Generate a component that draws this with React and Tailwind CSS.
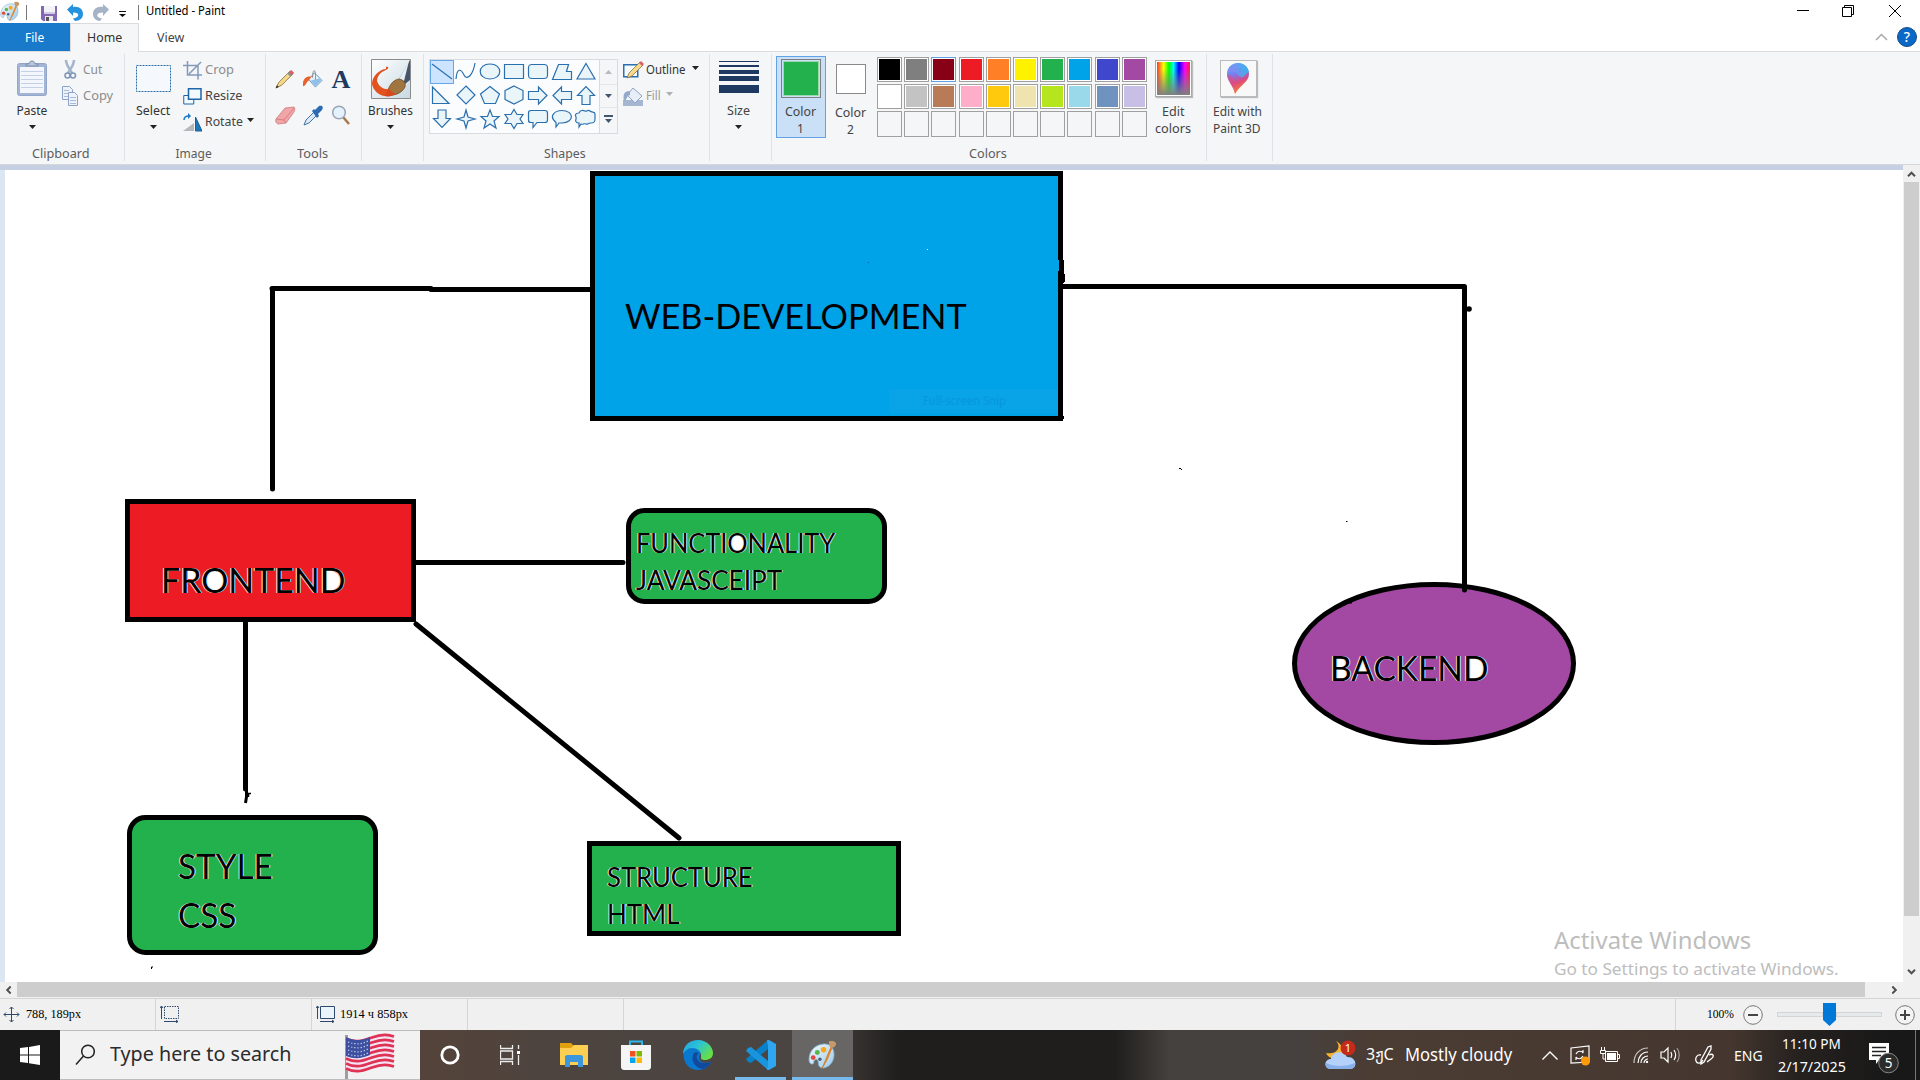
import React, { useLayoutEffect, useRef, useState } from "react";

/* Single line of text condensed or widened to a fixed width. */
function Fit({ w, className = "", children }) {
  const ref = useRef(null);
  const [scale, setScale] = useState(1);
  useLayoutEffect(() => {
    if (ref.current && ref.current.offsetWidth) setScale(w / ref.current.offsetWidth);
  }, [w, children]);
  return (
    <span className={"block shrink-0 whitespace-nowrap " + className} style={{ width: w }}>
      <span ref={ref} className="inline-block origin-left" style={{ transform: `scaleX(${scale})` }}>
        {children}
      </span>
    </span>
  );
}

function Caret({ className = "text-[#222]" }) {
  return (
    <svg className={"block shrink-0 " + className} width="7" height="4" viewBox="0 0 7 4">
      <path d="M0 0h7L3.5 4z" fill="currentColor" />
    </svg>
  );
}

function PaletteIcon({ className }) {
  return (
    <svg className={className} viewBox="0 0 28 28">
      <defs>
        <linearGradient id="pal" x1="0" y1="0" x2="1" y2="1">
          <stop offset="0" stopColor="#f2fafe" />
          <stop offset="1" stopColor="#9ccbe8" />
        </linearGradient>
      </defs>
      <path d="M14 4C6 5 1 11 1 19c0 3 2 5 4 4 1-1 0-3 2-4s3 1 3 3c0 3 1 5 5 5 7-1 11-8 10-15C24 6 20 3 14 4z" fill="url(#pal)" stroke="#7fb0d0" strokeWidth=".8" />
      <circle cx="5" cy="17" r="2.3" fill="#e0483c" />
      <circle cx="9" cy="12" r="2.4" fill="#5bb548" />
      <circle cx="15" cy="9.5" r="2.7" fill="#fba81c" />
      <circle cx="11.500" cy="18.500" r="1.700" fill="#4a6378" />
      <path d="M22 7 13.500 27.500 18.500 19 23.500 7z" fill="#f38b21" stroke="#d36c12" strokeWidth=".6" />
      <path d="M20 1c1 1 4-1 6 1 2 1 1 4-1 5l-3 1c-1-2-2-4-2-7z" fill="#c69a6b" />
    </svg>
  );
}

function TitleBar() {
  return (
    <div className="flex h-[23px] items-start bg-white">
      <PaletteIcon className="mt-[1px] h-[20px] w-[20px]" />
      <div className="ml-[6px] mt-[5px] h-[15px] w-px bg-[#777]" />
      <svg className="ml-[14px] mt-[6px]" width="16" height="15" viewBox="0 0 16 15">
        <path d="M0 0h16v15H2l-2-2z" fill="#8468b4" />
        <path d="M3 0h11v8H3z" fill="#f1f3f6" />
        <path d="M3 6h11v2H3z" fill="#d3cbe3" />
        <path d="M4 10h8v5H4z" fill="#e8e8ef" />
        <path d="M5 11h3v4H5z" fill="#555" />
      </svg>
      <svg className="ml-[10px] mt-[3px]" width="16" height="19" viewBox="0 0 16 19">
        <path d="M0 6.500 6 1v3c6-1 10 2 10 7 0 4-3 7-8 7l-2-2.500c6-.5 8-6 0-6v3.500z" fill="#2492dc" />
      </svg>
      <svg className="ml-[10px] mt-[3px]" width="16" height="19" viewBox="0 0 16 19">
        <path d="M16 6.500 10 1v3C4 3 0 6 0 11c0 4 3 7 7 7l2-2.500c-6-.5-7-6 1-6v3.500z" fill="#a5b3c7" />
      </svg>
      <svg className="ml-[10px] mt-[11px]" width="7" height="6" viewBox="0 0 7 6">
        <path d="M0 0h7v1H0zM0 3h7L3.500 6z" fill="#111" />
      </svg>
      <div className="ml-[12px] mt-[5px] h-[15px] w-px bg-[#777]" />
      <Fit w={79} className="ml-[7px] mt-[3px] text-[12px] leading-[16px] text-black">Untitled - Paint</Fit>
      <svg className="ml-auto mr-[18px] mt-[5px]" width="105" height="13" viewBox="0 0 105 13" fill="none" stroke="#000">
        <path d="M0 5.500h12" />
        <path d="M45.500 2.500h9v9h-9zM47.500 2.500v-2h9v9h-2" />
        <path d="M92 0l12 12M104 0 92 12" />
      </svg>
    </div>
  );
}

function Tabs() {
  return (
    <div className="flex h-[29px] border-b border-[#dadbdc] bg-white text-[12px] leading-[16px]">
      <div className="flex h-[28px] w-[70px] items-center justify-center bg-[#1979ca] pr-px pt-px text-white">
        <Fit w={19}>File</Fit>
      </div>
      <div className="flex h-[29px] w-[69px] items-center justify-center border-x border-t border-[#dadbdc] bg-[#f5f6f7] text-[#333]">
        <Fit w={35}>Home</Fit>
      </div>
      <Fit w={27} className="ml-[18px] mt-[7px] text-[#444]">View</Fit>
      <div className="ml-auto mr-[3px] flex items-center">
        <svg width="13" height="8" viewBox="0 0 13 8" fill="none" stroke="#aaa" strokeWidth="1.500">
          <path d="M1 7l5.500-5.500L12 7" />
        </svg>
        <div className="ml-[9px] flex h-[20px] w-[20px] items-center justify-center rounded-full border border-[#174a80] bg-[#0a68c8] text-[14px] font-medium text-white">?</div>
      </div>
    </div>
  );
}

function Group({ className, label, labelW, children }) {
  return (
    <div className={"flex h-[112px] shrink-0 flex-col " + className}>
      <div className="flex min-h-0 flex-1">
        <div className="flex min-w-0 flex-1 flex-col">
          <div className="flex h-[92px] items-start">{children}</div>
          {label && (
            <div className="flex justify-center pr-[3px] pt-[2px] text-[12px] leading-[16px] text-[#5c5c5c]">
              <Fit w={labelW}>{label}</Fit>
            </div>
          )}
        </div>
        <div className="mt-[2px] h-[107px] w-px bg-[#dfe1e4]" />
      </div>
    </div>
  );
}

function ClipboardGroup() {
  return (
    <Group className="w-[125px]" label={"Clipboard"} labelW={58}>
      <div className="ml-[16px] flex w-[32px] flex-col items-center pt-[8px]">
        <svg width="32" height="37" viewBox="0 0 32 37">
          <rect x="1.500" y="3.500" width="29" height="32" rx="2" fill="#a3b5d6" stroke="#93a6c8" />
          <path d="M4 7h24v26H4z" fill="#f3f7fd" />
          <path d="M5 11.500h22M5 15.500h22M5 19.500h22M5 23.500h22M5 27.500h22" stroke="#c3d0e5" />
          <path d="M10 6V4h3c0-4 6-4 6 0h3v2z" fill="#b9c6dc" stroke="#7f91b0" />
        </svg>
        <Fit w={31} className="mt-[6px] text-[12px] leading-[16px] text-[#333]">Paste</Fit>
        <Caret className="mt-[6px] text-[#222]" />
      </div>
      <div className="ml-[14px] flex flex-col pt-[8px] text-[12px] leading-[16px] text-[#8d8d8d]">
        <div className="flex h-[20px] items-center">
          <svg width="17" height="20" viewBox="0 0 17 20" fill="none">
            <path d="M4 0c0 5 3 8 6 13M12 0c0 5-3 8-6 13" stroke="#a3b4cd" strokeWidth="2.500" />
            <circle cx="5.500" cy="15.500" r="2.500" stroke="#7e95b8" strokeWidth="1.500" />
            <circle cx="11" cy="15.500" r="2.500" stroke="#7e95b8" strokeWidth="1.500" />
          </svg>
          <Fit w={19} className="ml-[4px]">Cut</Fit>
        </div>
        <div className="mt-[6px] flex h-[20px] items-center">
          <svg width="17" height="20" viewBox="0 0 17 20" fill="#eef3fb" stroke="#8ca2c6">
            <path d="M.5.5h7l3 3v10H.5z" />
            <path d="M6.500 6.500h6l3 3v10h-9z" />
            <path d="M2 4.500h5M2 7.500h4M2 10.500h4M8 11.500h6M8 14.500h6M8 17.500h6" stroke="#a9bad6" />
          </svg>
          <Fit w={30} className="ml-[4px]">Copy</Fit>
        </div>
      </div>
    </Group>
  );
}

function ImageGroup() {
  return (
    <Group className="w-[141px]" label="Image" labelW={36}>
      <div className="ml-[11px] flex w-[35px] flex-col items-center pt-[13px]">
        <svg width="35" height="27" viewBox="0 0 35 27">
          <rect x=".5" y=".5" width="34" height="26" fill="#f5f9fe" stroke="#2a6cab" strokeDasharray="2 1" />
        </svg>
        <Fit w={34} className="-ml-px mt-[11px] text-[12px] leading-[16px] text-[#333]">Select</Fit>
        <Caret className="-ml-px mt-[6px] text-[#222]" />
      </div>
      <div className="ml-[12px] flex flex-col pt-[8px] text-[12px] leading-[16px] text-[#444]">
        <div className="flex h-[20px] items-center text-[#8d8d8d]">
          <svg width="19" height="19" viewBox="0 0 19 19" fill="none" stroke="#8299bb" strokeWidth="1.500">
            <path d="M0 4.500h15v14M4.500 0v14H19M6 13 18 1" />
          </svg>
          <Fit w={29} className="ml-[3px]">Crop</Fit>
        </div>
        <div className="mt-[6px] flex h-[20px] items-center">
          <svg width="19" height="17" viewBox="0 0 19 17" fill="#f4f9fe" stroke="#1d66a8">
            <path d="M.75 7.500h10v8.500h-10z" />
            <path d="M5.500.75h12.500v10.500H5.500z" strokeWidth="1.500" />
          </svg>
          <Fit w={37} className="ml-[3px]">Resize</Fit>
        </div>
        <div className="mt-[6px] flex h-[20px] items-center">
          <svg width="19" height="19" viewBox="0 0 19 19">
            <path d="M0 18 11 10v8z" fill="#b5b8bc" />
            <path d="M12.500 4v14H19z" fill="#2177b8" stroke="#1b5f97" />
            <path d="M1 7c0-3 2-4 5-4" fill="none" stroke="#1d78c8" strokeWidth="1.500" />
            <path d="M5 0l3 3-3 3z" fill="#1d78c8" />
          </svg>
          <Fit w={38} className="ml-[3px]">Rotate</Fit>
          <Caret className="-mt-[5px] ml-[4px] text-[#222]" />
        </div>
      </div>
    </Group>
  );
}

function ToolsGroup() {
  return (
    <Group className="w-[96px]" label="Tools" labelW={31}>
      <div className="ml-[9px] grid grid-cols-[20px_20px_20px] gap-x-[8px] gap-y-[15px] pt-[17px]">
        <svg width="20" height="20" viewBox="0 0 21 21">
          <path d="M1 20l3-6L16 2l3 3L7 17z" fill="#f7d98e" stroke="#816128" strokeWidth=".8" />
          <path d="M14 4l3-3 3 3-3 3z" fill="#d8606c" />
          <path d="M13 5l1.500-1.500 3 3L16 8z" fill="#7f9a8c" />
          <path d="M1 20l1-3 2 2z" fill="#222" />
        </svg>
        <svg width="20" height="20" viewBox="0 0 21 21">
          <path d="M12 4l8 8-7 7-7-8z" fill="#e4f0fa" stroke="#6b93b8" />
          <path d="M8 12l9-2 2 2-6 6z" fill="#8fc1e8" />
          <path d="M10 9c0-10 4-10 3 2" fill="none" stroke="#888" />
          <path d="M9 8c-5-1-10 2-9 10 3 0 3-4 6-6z" fill="#e9622d" />
        </svg>
        <div className="flex h-[21px] items-center justify-center font-['Liberation_Serif'] text-[26px] font-bold leading-[20px] text-[#1f3a60]">A</div>
        <svg width="21" height="21" viewBox="0 0 21 21">
          <path d="M1 14 10 3l9-1c1 1 1 3 0 5l-8 11-8 1c-2-1-3-3-2-5z" fill="#f2a5a7" stroke="#cc7a7d" strokeWidth=".8" />
          <path d="M1 14l8 1L19 3M9 15l2 3" fill="none" stroke="#d98084" />
        </svg>
        <svg width="21" height="21" viewBox="0 0 21 21">
          <path d="M1 20l2-5 8-8 3 3-8 8z" fill="#d8eaf8" stroke="#48749f" />
          <path d="M9 6l2-2 1 1 4-4c3-1 5 1 3 4l-4 4 1 2-2 2z" fill="#2b6bb3" />
        </svg>
        <svg width="21" height="21" viewBox="0 0 21 21">
          <path d="M12 12l6 7" stroke="#a9784c" strokeWidth="2.500" />
          <circle cx="8" cy="7.500" r="6.300" fill="#e5f2fd" stroke="#99a5b3" strokeWidth="1.500" />
        </svg>
      </div>
    </Group>
  );
}

function BrushesGroup() {
  return (
    <Group className="w-[62px]">
      <div className="ml-[6px] flex w-[45px] flex-col items-center pt-[7px]">
        <svg width="40" height="40" viewBox="0 0 40 40">
          <defs>
            <linearGradient id="bb" x1="0" y1="0" x2="1" y2="1">
              <stop offset="0" stopColor="#fff" />
              <stop offset="1" stopColor="#c7d9e2" />
            </linearGradient>
          </defs>
          <path d="M.5.5h39v39H.5z" fill="url(#bb)" stroke="#8b8b8b" />
          <path d="M15 8c3-1 3 2 0 3C9 13 6 18 6 22c2 6 7 9 13 8l0 7C10 39 2 32 1 25 1 17 9 10 15 10z" fill="#e2521f" />
          <path d="M28 20 39 1v20l-5 4z" fill="#46546a" />
          <path d="M28 20 38 2l-5 20z" fill="#e8edf3" />
          <path d="M16 36c1-8 5-15 12-16 5 1 7 4 6 8-3 6-10 9-18 8z" fill="#a0753f" stroke="#6f4b24" strokeWidth=".8" />
          <path d="M14 37c1-3 2-6 4-8 1 3 4 5 7 6-4 2-7 3-11 2z" fill="#d9481c" />
        </svg>
        <Fit w={45} className="mt-[4px] text-[12px] leading-[16px] text-[#333]">Brushes</Fit>
        <Caret className="mt-[6px] text-[#222]" />
      </div>
    </Group>
  );
}

const SHAPES = [
  "M2 4l20 15",
  "M2 19c1-12 5-10 8-4s9 0 11-12",
  "M12 4c13 0 13 15 0 15S-1 4 12 4z",
  "M2.500 4.500h19v14h-19z",
  "M6 4.500h12c3 0 3.500 1 3.500 3.500v7c0 2.500-.5 3.500-3.500 3.500H6c-3 0-3.500-1-3.500-3.500V8c0-2.500.5-3.500 3.500-3.500z",
  "M8.500 4.500h10l-2 7h5v8h-19z",
  "M12 3.500l9 15.500H3z",
  "M2.500 3v16.500H19z",
  "M12 2l9 9-9 9-9-9z",
  "M12 2.500l9.500 7.500-4 9.500h-11L2.500 10z",
  "M12 2l9 4.500v9L12 20l-9-4.500v-9z",
  "M2.500 7.500h10V3L21 11.500 12.500 20v-4.500h-10z",
  "M21.500 7.500h-10V3L3 11.500l8.500 8.500v-4.500h10z",
  "M8 20.500V11.500H3.500L12 2.500l8.500 9H16v9z",
  "M8 2v8.500H3.500l8.500 9 8.500-9H16V2z",
  "M12 2l2 7 7 2-7 2-2 7-2-7-7-2 7-2z",
  "M12 2l2.500 6.500h6.500l-5 4.500 2 7-6-4-6 4 2-7-5-4.500h6.500z",
  "M12 1.500l3 5h6l-3 4.500 3 4.500h-6l-3 5-3-5H3L6 11 3 6.500h6z",
  "M5 2.500h14c2 0 2.500 1 2.500 2.500v7c0 2-.5 2.500-2.500 2.500h-8l-4 5v-5H5c-2 0-2.500-.5-2.500-2.500V5c0-1.500.5-2.500 2.500-2.500z",
  "M6 14.500C-2 8 5 2.500 12 2.500c12 0 13 12 0 12.500H9l-3 4z",
  "M5 5c1-3 4-3 6-2s3-2 5 0 5 0 5 3 0 3 0 5 0 4-4 4-3 2-5 1-3 1-5 0l-2 3v-4c-3 0-4-2-3-4s-2-4 0-5 0-1 3-1z",
];

function ShapesGroup() {
  return (
    <Group className="w-[286px]" label="Shapes" labelW={42}>
      <div className="ml-[5px] mt-[7px] flex h-[75px] border border-[#d8dbdf] bg-[#fbfcfd]">
        <div className="grid h-[73px] w-[169px] grid-cols-[repeat(7,24px)] grid-rows-[24px_24px_24px]">
          {SHAPES.map((d, i) => (
            <div key={i} className={i === 0 ? "h-[24px] w-[24px] bg-[#cce4ff] outline outline-1 -outline-offset-1 outline-[#66a7e8]" : "h-[24px] w-[24px]"}>
              <svg width="24" height="24" viewBox="0 0 24 24" fill={i < 2 ? "none" : "#eaf5fa"} stroke="#2a6fae" strokeWidth="1.200">
                <path d={d} />
              </svg>
            </div>
          ))}
        </div>
        <div className="flex w-[18px] flex-col border-l border-[#d8dbdf] bg-[#f5f6f7]">
          <div className="flex h-[24px] items-center justify-center">
            <Caret className="rotate-180 text-[#b4b8c2]" />
          </div>
          <div className="flex h-[24px] items-center justify-center border-y border-[#e3e5e8]">
            <Caret className="text-[#44546a]" />
          </div>
          <div className="flex flex-1 items-center justify-center pb-[3px]">
            <svg width="9" height="8" viewBox="0 0 9 8" fill="#44546a">
              <path d="M0 0h9v2H0zM1 4h7L4.500 8z" />
            </svg>
          </div>
        </div>
      </div>
      <div className="ml-[5px] flex flex-col pt-[8px] text-[12px] leading-[16px]">
        <div className="flex h-[20px] items-center text-[#333]">
          <svg width="21" height="18" viewBox="0 0 21 18">
            <path d="M.75 3.750h14v12h-14z" fill="#f8fbfe" stroke="#2a6fae" strokeWidth="1.500" />
            <path d="M4 17l2-5L17 1l3 3L9 15z" fill="#f7d98e" stroke="#816128" strokeWidth=".7" />
            <path d="M16 2l2-2 3 3-2 2z" fill="#d8606c" />
          </svg>
          <Fit w={40} className="ml-[2px]">Outline</Fit>
          <Caret className="-mt-[4px] ml-[6px] text-[#222]" />
        </div>
        <div className="mt-[6px] flex h-[20px] items-center text-[#9a9a9a]">
          <svg width="21" height="20" viewBox="0 0 21 20">
            <path d="M0 14h20v6H0z" fill="#a6b6d0" />
            <path d="M10 2l9 8-7 7-8-8z" fill="#e8eef8" stroke="#8ea2c3" />
            <path d="M7 5C0 5 0 10 1 15c3 0 2-5 6-6z" fill="#95a9ca" />
          </svg>
          <Fit w={15} className="ml-[2px]">Fill</Fit>
          <Caret className="-mt-[4px] ml-[5px] text-[#b0b0b0]" />
        </div>
      </div>
    </Group>
  );
}

function SizeGroup() {
  return (
    <Group className="w-[62px]">
      <div className="ml-[9px] flex w-[40px] flex-col items-center pt-[9px]">
        <div className="h-px w-full bg-[#1e3a63]" />
        <div className="mt-[3px] h-[2px] w-full bg-[#1e3a63]" />
        <div className="mt-[3px] h-[4px] w-full bg-[#1e3a63]" />
        <div className="mt-[2px] h-[5px] w-full bg-[#1e3a63]" />
        <div className="mt-[4px] h-[8px] w-full bg-[#1e3a63]" />
        <Fit w={23} className="-ml-[2px] mt-[10px] text-[12px] leading-[16px] text-[#444]">Size</Fit>
        <Caret className="-ml-[2px] mt-[6px] text-[#222]" />
      </div>
    </Group>
  );
}

const COLORS = [
  "bg-[#000000]", "bg-[#7f7f7f]", "bg-[#880015]", "bg-[#ed1c24]", "bg-[#ff7f27]", "bg-[#fff200]", "bg-[#22b14c]", "bg-[#00a2e8]", "bg-[#3f48cc]", "bg-[#a349a4]",
  "bg-[#ffffff]", "bg-[#c3c3c3]", "bg-[#b97a57]", "bg-[#ffaec9]", "bg-[#ffc90e]", "bg-[#efe4b0]", "bg-[#b5e61d]", "bg-[#99d9ea]", "bg-[#7092be]", "bg-[#c8bfe7]",
];

function ColorsGroup() {
  return (
    <Group className="w-[435px]" label="Colors" labelW={38}>
      <div className="ml-[4px] mt-[4px] flex h-[82px] w-[50px] flex-col items-center border border-[#62a2e4] bg-[#c9e0f7] pt-[2px] text-[12px] text-[#444]">
        <div className="h-[40px] w-[40px] border border-[#7f7f7f] bg-[#c9e0f7] p-[1px]">
          <div className="h-full w-full border border-[#9bd8b0] bg-[#22b14c]" />
        </div>
        <Fit w={31} className="-ml-px mt-[5px] leading-[17px]">Color</Fit>
        <span className="-ml-px leading-[17px]">1</span>
      </div>
      <div className="ml-[9px] flex w-[31px] flex-col items-center pt-[12px] text-[12px] text-[#444]">
        <div className="h-[30px] w-[30px] border border-[#8a8a8a] bg-white" />
        <Fit w={31} className="mt-[10px] leading-[17px]">Color</Fit>
        <span className="leading-[17px]">2</span>
      </div>
      <div className="ml-[11px] mt-[5px] grid grid-cols-[repeat(10,25px)] gap-x-[2.200px] gap-y-[2px]">
        {COLORS.map((c, i) => (
          <div key={i} className={i === 2 ? "h-[25px] border border-[#62a2e4] bg-white p-px" : "h-[25px] border border-[#a0a0a0] bg-white p-px"}>
            <div className={"h-full w-full " + c} />
          </div>
        ))}
        {Array.from({ length: 10 }, (_, i) => (
          <div key={i} className="h-[26px] border border-[#a0a0a0] bg-[#f5f6f7]" />
        ))}
      </div>
      <div className="ml-[8px] flex w-[37px] flex-col items-center pt-[8px] text-[12px] text-[#444]">
        <div className="h-[37px] w-[37px] border border-[#aaa] bg-white p-[1px] shadow-[1px_1px_1px_#bbb]">
          <div className="h-full w-full bg-[linear-gradient(90deg,#f33,#ff0_20%,#0f0_36%,#0ff_50%,#00f_66%,#f0f_84%,#f22)]">
            <div className="h-full w-full bg-[linear-gradient(180deg,transparent_20%,#808080)]" />
          </div>
        </div>
        <Fit w={22} className="mt-[6px] leading-[17px]">Edit</Fit>
        <Fit w={36} className="leading-[17px]">colors</Fit>
      </div>
    </Group>
  );
}

function Paint3DGroup() {
  return (
    <Group className="w-[66px]">
      <div className="ml-[6px] flex w-[50px] flex-col items-center pt-[8px] text-[12px] text-[#444]">
        <div className="flex h-[37px] w-[37px] items-center justify-center border border-[#bbb] bg-[#f8f8f8] shadow-[1px_1px_1px_#bbb]">
          <svg width="22" height="31" viewBox="0 0 22 31">
            <defs>
              <linearGradient id="p3" x1=".2" y1="0" x2=".5" y2="1">
                <stop offset="0" stopColor="#35c8f4" />
                <stop offset=".35" stopColor="#7a7df2" />
                <stop offset=".65" stopColor="#d94a86" />
                <stop offset=".9" stopColor="#f9a01d" />
              </linearGradient>
              <linearGradient id="p3b" x1="0" y1="0" x2="1" y2="0">
                <stop offset="0" stopColor="#a877f5" />
                <stop offset="1" stopColor="#1fc4ee" />
              </linearGradient>
            </defs>
            <path d="M11 0c7 0 11 5 11 11 0 8-8 10-14 20-1-8-8-13-8-20C0 5 4 0 11 0z" fill="url(#p3)" />
            <path d="M1 9C2 4 6 0 11 0c6 0 10 4 11 9-3 0-5 8-10 4C9 8 5 8 1 9z" fill="url(#p3b)" opacity=".8" />
            <path d="M0 12c3-2 6 4 9 6 3 1 8-2 11-2-4 4-8 8-12 15-1-7-8-13-8-19z" fill="#e84a74" opacity=".5" />
          </svg>
        </div>
        <Fit w={49} className="-ml-px mt-[6px] leading-[17px]">Edit with</Fit>
        <Fit w={48} className="-ml-[2px] leading-[17px]">Paint 3D</Fit>
      </div>
    </Group>
  );
}

/* x, baseline y, width, font size class */
const LABELS = [
  { t: "WEB-DEVELOPMENT", x: 625, y: 329, w: 342, f: 35, cls: "text-[35px]" },
  { t: "FRONTEND", x: 161, y: 593, w: 184, f: 35, cls: "text-[35px] [text-shadow:-1px_0_#ffe8c8,1px_0_#c8e4ff]" },
  { t: "FUNCTIONALITY", x: 636, y: 554, w: 199, f: 27, cls: "text-[27px] [text-shadow:-1px_0_#ffe8c8,1px_0_#c8e4ff]" },
  { t: "JAVASCEIPT", x: 636, y: 591, w: 146, f: 27, cls: "text-[27px] [text-shadow:-1px_0_#ffe8c8,1px_0_#c8e4ff]" },
  { t: "STYLE", x: 178, y: 879, w: 95, f: 35, cls: "text-[35px] [text-shadow:-1px_0_#ffe8c8,1px_0_#c8e4ff]" },
  { t: "CSS", x: 178, y: 928, w: 58, f: 35, cls: "text-[35px] [text-shadow:-1px_0_#ffe8c8,1px_0_#c8e4ff]" },
  { t: "STRUCTURE", x: 607, y: 888, w: 146, f: 27, cls: "text-[27px] [text-shadow:-1px_0_#ffe8c8,1px_0_#c8e4ff]" },
  { t: "HTML", x: 607, y: 925, w: 73, f: 27, cls: "text-[27px] [text-shadow:-1px_0_#ffe8c8,1px_0_#c8e4ff]" },
  { t: "BACKEND", x: 1330, y: 681, w: 158, f: 35, cls: "text-[35px] [text-shadow:-1px_0_#ffe8c8,1px_0_#c8e4ff]" },
];

function Canvas() {
  return (
    <div className="relative h-[812px] w-[1898px] overflow-hidden bg-white">
      <svg className="absolute left-0 top-0" width="1898" height="812" viewBox="5 170 1898 812" fill="none" stroke="#000" strokeWidth="5">
        <path d="M592.500 173.500h468v245h-468z" fill="#00a2e8" />
        <path d="M1058 260h1v11h-1z" fill="#00a2e8" stroke="none" />
        <path d="M1060 260h4v14h1v8h-1v1h-4zM1061 416h3v3h-3z" fill="#000" stroke="none" />
        <path d="M889 389h169v24H889z" fill="#1ea4e6" opacity=".3" stroke="none" />
        <path d="M927 249h1v1h-1z" fill="#fff" stroke="none" />
        <path d="M868 262h1v1h-1z" fill="#1658a0" stroke="none" />
        <path d="M272 288.500h159M431 289.500h160M272.500 290v199" strokeLinecap="round" />
        <path d="M1063 286.500h401.500V590" strokeLinecap="round" strokeLinejoin="round" />
        <circle cx="1469" cy="309" r="2.800" fill="#000" stroke="none" />
        <path d="M127.500 501.500h286v118h-286z" fill="#ed1c24" />
        <path d="M416 562.500h207" strokeLinecap="round" />
        <rect x="628.500" y="510.500" width="256" height="91" rx="16" fill="#22b14c" />
        <path d="M245.500 622v167M416 624l263 214" strokeLinecap="round" />
        <path d="M246.500 788v9l-1 6" strokeWidth="3" />
        <path d="M247 793.500h4M248.500 797v-4" strokeWidth="1.500" />
        <rect x="129.500" y="817.500" width="246" height="135" rx="16" fill="#22b14c" />
        <path d="M589.500 843.500h309v90h-309z" fill="#22b14c" />
        <ellipse cx="1434" cy="663.500" rx="139.500" ry="79" fill="#a349a4" />
        <path d="M1464.500 570v20" strokeLinecap="round" />
        <path d="M1343 602.500h9" strokeWidth="2" />
        <path d="M1179 468.500h2M1181 469.500h1M1346 521.500h1.500M151.500 969v-2h1.500" strokeWidth="1" />
        <g fill="#fff" stroke="none">
          <path d="M188 570h7c4 1 4 8 0 9h-7zM327 570c17 0 18 21 0 21z" />
          <ellipse cx="214.500" cy="580" rx="10" ry="11" />
          <ellipse cx="737" cy="544" rx="7" ry="9" />
          <path d="M1336 658c12-1 13 9 6 10 12 2 9 12-6 11zM1362 660l6 13h-12zM1470 658c19 0 20 21 0 21z" />
        </g>
      </svg>
      {LABELS.map((l) => (
        <div key={l.t} className="absolute" style={{ left: l.x - 5, top: l.y - 170 - Math.round(l.f * 0.987) }}>
          <Fit w={l.w} className={"font-['Lato'] leading-[1.200] text-black " + l.cls}>{l.t}</Fit>
        </div>
      ))}
      <Fit w={83} className="absolute left-[918px] top-[222px] text-[13px] leading-[16px] text-[#0797dc]">Full-screen Snip</Fit>
      <div className="absolute left-[1549px] top-[754px] text-[#bdbdbd]">
        <Fit w={197} className="text-[24px] leading-[32px]">Activate Windows</Fit>
        <Fit w={285} className="text-[17px] leading-[26px]">Go to Settings to activate Windows.</Fit>
      </div>
    </div>
  );
}

function Arrow({ className = "" }) {
  return (
    <svg className={"block " + className} width="9" height="6" viewBox="0 0 9 6" fill="none" stroke="#505050" strokeWidth="2">
      <path d="M1 5.200 4.500 1.700 8 5.200" />
    </svg>
  );
}

function StatusBar() {
  return (
    <div className="flex h-[32px] items-stretch border-t border-[#d5d5d5] bg-[#f0f0f0] font-['Liberation_Serif'] text-[12px] leading-[14px] text-black">
      <div className="flex w-[156px] items-center border-r border-[#d5d5d5] pl-[3px]">
        <svg width="17" height="17" viewBox="0 0 17 17" fill="none" stroke="#2f4a6c">
          <path d="M8.500 1v15M1 8.500h15M6.500 3l2-2 2 2M6.500 14l2 2 2-2M3 6.500l-2 2 2 2M14 6.500l2 2-2 2" />
        </svg>
        <Fit w={55} className="-mt-px ml-[6px]">788, 189px</Fit>
      </div>
      <div className="flex w-[156px] items-center border-r border-[#d5d5d5] pl-[4px]">
        <svg width="19" height="17" viewBox="0 0 19 17" fill="none" stroke="#2f4a6c">
          <path d="M4.500.5h14v12h-14z" strokeDasharray="1.500 1" />
          <path d="M1.500 0v13M0 2l1.500-2L3 2M4 15.500h14M16 14l2 1.500-2 1.500" />
        </svg>
      </div>
      <div className="flex w-[156px] items-center border-r border-[#d5d5d5] pl-[4px]">
        <svg width="19" height="17" viewBox="0 0 19 17" fill="none" stroke="#2f4a6c">
          <path d="M4.500.5h14v12h-14z" fill="#e9f4fb" />
          <path d="M1.500 0v13M0 2l1.500-2L3 2M4 15.500h14M16 14l2 1.500-2 1.500" />
        </svg>
        <Fit w={68} className="-mt-px ml-[5px]">1914 ч 858px</Fit>
      </div>
      <div className="w-[156px] border-r border-[#d5d5d5]" />
      <div className="flex-1 border-r border-[#d5d5d5]" />
      <div className="flex w-[244px] items-center pl-[31px]">
        <Fit w={27} className="-mt-px">100%</Fit>
        <svg className="ml-[9px]" width="20" height="20" viewBox="0 0 20 20" fill="#f4f4f4" stroke="#777">
          <circle cx="10" cy="10" r="9.300" />
          <path d="M5 10h10" stroke="#444" strokeWidth="2" />
        </svg>
        <div className="ml-[14px] flex h-[24px] w-[105px] items-center">
          <div className="h-[5px] w-[46px] border border-[#d2d5d8] bg-[#e7eaea]" />
          <svg width="13" height="23" viewBox="0 0 13 23">
            <path d="M0 0h13v17l-6.500 6L0 17z" fill="#0078d7" />
          </svg>
          <div className="h-[5px] w-[46px] border border-[#d2d5d8] bg-[#e7eaea]" />
        </div>
        <svg className="ml-[13px]" width="20" height="20" viewBox="0 0 20 20" fill="#f4f4f4" stroke="#777">
          <circle cx="10" cy="10" r="9.300" />
          <path d="M5 10h10M10 5v10" stroke="#444" strokeWidth="2" />
        </svg>
      </div>
    </div>
  );
}

function Flag() {
  const stripes = [0, 1, 2, 3, 4, 5, 6];
  return (
    <svg className="block" width="50" height="46" viewBox="0 0 50 46">
      <path d="M0 2h3v44H0z" fill="#9a9da3" />
      <path d="M1 4c10 5 18 2 26-1s14-4 22-1v33c-8-3-14-2-22 1s-16 5-26 1z" fill="#f3e3f3" />
      {stripes.map((i) => (
        <path key={i} d="M1 5.500c10 5 18 2 26-1s14-4 22-1" transform={`translate(0 ${i * 5})`} fill="none" stroke="#df3354" strokeWidth="2.600" />
      ))}
      <path d="M1 4c10 5 17 3 24 0v18c-8 3-14 5-24 1z" fill="#3d4fa0" />
      <path d="M3 9c9 3 14 2 20-1M3 13c9 3 14 2 20-1M3 17c9 3 14 2 20-1M3 21c9 3 14 2 20-1" fill="none" stroke="#cfd6f3" strokeWidth="1.200" strokeDasharray="1.200 2" />
    </svg>
  );
}

function Taskbar() {
  return (
    <div className="flex h-[50px] items-stretch bg-[linear-gradient(90deg,#54433a_0,#54433a_420px,#4d443f_560px,#4a4542_792px,#35322f_855px,#1f1e1c_900px,#1f1e1c_1115px,#45413e_1170px,#46413e_1300px,#4b3c34_1370px,#45372f_1730px,#25211f_1800px,#181818_1890px)]">
      <div className="flex w-[60px] items-center justify-center bg-[#1a1a1a]">
        <svg width="20" height="20" viewBox="0 0 20 20" fill="#fff">
          <path d="M0 3l8-1v7.500H0zM9 1.900 20 0v9.500H9zM0 10.500h8V18l-8-1zM9 10.500h11V20L9 18.200z" />
        </svg>
      </div>
      <div className="flex w-[360px] items-center border-y border-[#bcbcbc] bg-[#f2f2f2] text-[#2b2b2b]">
        <svg className="ml-[15px]" width="20" height="22" viewBox="0 0 20 22" fill="none" stroke="#222" strokeWidth="1.500">
          <circle cx="13" cy="7.500" r="6.300" />
          <path d="M8.500 12 1 20.500" />
        </svg>
        <Fit w={182} className="-mt-[3px] ml-[15px] text-[19.500px] leading-[26px]">Type here to search</Fit>
        <div className="ml-[53px] mt-[2px]">
          <Flag />
        </div>
      </div>
      <div className="flex w-[60px] items-center justify-center">
        <svg width="20" height="20" viewBox="0 0 20 20" fill="none" stroke="#fff" strokeWidth="2.800">
          <circle cx="10" cy="10" r="8.200" />
        </svg>
      </div>
      <div className="flex w-[60px] items-center justify-center">
        <svg width="20" height="20" viewBox="0 0 20 20" fill="none" stroke="#eee" strokeWidth="1.300">
          <path d="M.5 0v3.500h12V0M.5 20v-3.500h12V20M.5 6h12v8H.5zM18.500 0v4M18.500 10v10" />
          <path d="M17 6h3v3h-3z" fill="#fff" stroke="none" />
        </svg>
      </div>
      <div className="flex w-[66px] items-center justify-center pl-[2px]">
        <svg width="28" height="24" viewBox="0 0 28 24">
          <path d="M0 0h11l3 3v4H0z" fill="#e0a010" />
          <path d="M0 5h11l3-3h14v20H0z" fill="#fccf52" />
          <path d="M5 24V14c0-1 1-2 2-2h14c1 0 2 1 2 2v10h-5v-5h-8v5z" fill="#3c96dc" />
        </svg>
      </div>
      <div className="flex w-[60px] items-center justify-center pr-px">
        <svg width="30" height="30" viewBox="0 0 30 30">
          <path d="M9 6V1.500h12V6" fill="none" stroke="#2bb8ec" strokeWidth="2" />
          <path d="M0 5h30v21c0 3-1 4-4 4H4c-3 0-4-1-4-4z" fill="#f5f5f5" />
          <path d="M9 11h5.500v5.500H9z" fill="#f25022" />
          <path d="M15.500 11H21v5.500h-5.500z" fill="#7fba00" />
          <path d="M9 17.500h5.500V23H9z" fill="#00a4ef" />
          <path d="M15.500 17.500H21V23h-5.500z" fill="#ffb900" />
        </svg>
      </div>
      <div className="flex w-[66px] items-center justify-center pr-[2px]">
        <svg width="30" height="30" viewBox="0 0 30 30">
          <defs>
            <linearGradient id="eg" x1="0" y1="0" x2="1" y2=".6">
              <stop offset="0" stopColor="#1f9fe5" />
              <stop offset=".5" stopColor="#2cc4d4" />
              <stop offset="1" stopColor="#66e044" />
            </linearGradient>
          </defs>
          <path d="M1 12C-1 22 6 30 15 30c6 0 11-3 13-8-7 2-12 0-12-5 0-2 2-3 2-5-2-5-13-6-17 0z" fill="#0b78d0" />
          <path d="M0 15C0 5 7 0 15 0c9 0 15 7 15 13 0 5-4 7-8 7-3 0-5-1-4-3 1-6-4-9-9-9-4 0-8 3-9 7z" fill="url(#eg)" />
          <path d="M11 13c-4 6 0 15 9 16 4-1 7-4 8-7-7 2-13 1-14-4-1-2 1-4 2-5-2-1-4-1-5 0z" fill="#114a9c" />
        </svg>
      </div>
      <div className="flex w-[60px] flex-col items-center justify-end pr-[3px]">
        <svg width="30" height="30" viewBox="0 0 30 30">
          <path d="M22 0 0 19l2 3 3 1L22 9z" fill="#0a80c8" />
          <path d="M22 30 0 11l2-3 3-1 17 14z" fill="#1a94dc" />
          <path d="M21 0h2l7 4v22l-7 4h-2l1-5V6z" fill="#2ea6f2" />
        </svg>
        <div className="mt-[7px] h-[3px] w-[51px] bg-[#76b9ed]" />
      </div>
      <div className="flex w-[61px] flex-col items-center justify-end bg-[#686664]">
        <PaletteIcon className="h-[29px] w-[29px]" />
        <div className="mt-[8px] h-[3px] w-[61px] bg-[#76b9ed]" />
      </div>
      <div className="ml-auto flex items-center text-white">
        <svg width="32" height="32" viewBox="0 0 32 32">
          <path d="M11 2c6 6 1 14-10 12 2 4 6 6 10 6 8 0 10-13 0-18z" fill="#f5b52e" />
          <path d="M6 30c-8 0-7-10 0-10 1-8 13-9 16-2 9-1 12 11 3 12z" fill="#b3d1fa" />
          <path d="M6 30c-4 0-6-3-5-6 8 4 20 4 29 0 0 4-2 6-5 6z" fill="#88b0ea" />
          <circle cx="23" cy="9" r="7.500" fill="#c42b1c" />
          <text x="23" y="13" fontSize="11" textAnchor="middle" fill="#fff" fontFamily="Noto Sans">1</text>
        </svg>
        <Fit w={28} className="-mt-[2px] ml-[9px] font-['Noto_Sans','DejaVu_Sans'] text-[16px] leading-[24px]">3ჟC</Fit>
        <Fit w={107} className="-mt-[3px] ml-[11px] text-[17.500px] leading-[24px]">Mostly cloudy</Fit>
        <svg className="ml-[30px]" width="16" height="9" viewBox="0 0 16 9" fill="none" stroke="#fff" strokeWidth="1.400">
          <path d="M.5 8.500 8 1l7.500 7.500" />
        </svg>
        <svg className="ml-[12px]" width="20" height="21" viewBox="0 0 20 21" fill="none" stroke="#fff" strokeWidth="1.200">
          <path d="M1 3 19 1v16L1 18zM6 9c2-4 6-3 7-1V5M13 11c-2 4-6 3-7 1v3" />
          <circle cx="15.500" cy="16" r="4.500" fill="#ff9a0a" stroke="none" />
        </svg>
        <svg className="ml-[10px]" width="20" height="16" viewBox="0 0 20 16" fill="none" stroke="#fff">
          <path d="M5.500 4.500h12v10h-12zM18 7.500h1.500v4H18M1.500 0v3M4.500 0v3M.5 3.500h5v3h-5zM3 7v5h3" />
          <path d="M7 6h9v7H7z" fill="#fff" stroke="none" />
        </svg>
        <svg className="ml-[13px]" width="16" height="16" viewBox="0 0 16 16" fill="none" stroke="#fff" strokeWidth="1.200">
          <path d="M1 16C1 7 7 1 15 1" opacity=".7" />
          <path d="M5 16c0-6 4-11 10-11M8 16c0-4 3-7 7-7M11 16c0-2 2-4 4-4" />
          <circle cx="14" cy="15" r="1.200" fill="#fff" stroke="none" />
        </svg>
        <svg className="ml-[11px]" width="21" height="18" viewBox="0 0 21 18" fill="none" stroke="#fff" strokeWidth="1.200">
          <path d="M1 6h3l4-4v14l-4-4H1zM11 6c1 2 1 4 0 6M14 4c2 3 2 7 0 10" />
          <path d="M17 2c3 4 3 10 0 14" opacity=".5" />
        </svg>
        <svg className="ml-[14px]" width="20" height="20" viewBox="0 0 20 20" fill="none" stroke="#fff" strokeWidth="1.300">
          <path d="M6 15 13 2l3-1v3L9 17l-3 2zM6 10c-4-1-6 3-5 6s5 3 7-1M14 10c4-2 6 1 2 4l-4 3" />
        </svg>
        <Fit w={29} className="ml-[19px] text-[15px] leading-[20px]">ENG</Fit>
        <div className="-mt-px ml-[14px] flex w-[69px] flex-col items-center text-[14.500px] leading-[23px]">
          <Fit w={59}>11:10 PM</Fit>
          <Fit w={68}>2/17/2025</Fit>
        </div>
        <svg className="ml-[22px] mr-[15px] mt-[5px]" width="32" height="32" viewBox="0 0 32 32">
          <path d="M1 1h20v17H11l-3 4v-4H1z" fill="#fff" />
          <path d="M4 5.500h14M4 9.500h14M4 13.500h9" stroke="#222" strokeWidth="1.300" />
          <circle cx="20.500" cy="21" r="9.800" fill="#2b2b2b" stroke="#888" />
          <text x="20.500" y="26" fontSize="13.500" textAnchor="middle" fill="#fff" fontFamily="Noto Sans">5</text>
        </svg>
        <div className="mr-[4px] h-[50px] w-px bg-[#777]" />
      </div>
    </div>
  );
}

export default function App() {
  return (
    <div className="flex h-[1080px] w-[1920px] flex-col overflow-hidden bg-white font-['Noto_Sans',sans-serif]">
      <TitleBar />
      <Tabs />
      <div className="flex h-[113px] shrink-0 border-b border-[#d5d7da] bg-[#f5f6f7]">
        <ClipboardGroup />
        <ImageGroup />
        <ToolsGroup />
        <BrushesGroup />
        <ShapesGroup />
        <SizeGroup />
        <ColorsGroup />
        <Paint3DGroup />
      </div>
      <div className="flex h-[817px] shrink-0">
        <div className="w-[1903px]">
          <div className="h-[5px] bg-[#c6d0e3]" />
          <div className="flex">
            <div className="w-[5px] bg-[#dce6f2]" />
            <Canvas />
          </div>
        </div>
        <div className="flex w-[17px] flex-col items-center bg-[#f0f0f0]">
          <div className="flex h-[17px] items-center">
            <Arrow />
          </div>
          <div className="h-[734px] w-[15px] bg-[#cdcdcd]" />
          <div className="flex flex-1 items-end pb-[7px]">
            <Arrow className="rotate-180" />
          </div>
        </div>
      </div>
      <div className="flex h-[16px] shrink-0 items-start bg-[#f0f0f0]">
        <div className="flex h-[15px] w-[17px] items-center justify-center">
          <Arrow className="-rotate-90" />
        </div>
        <div className="h-[15px] w-[1848px] bg-[#cdcdcd]" />
        <div className="ml-[25px] flex h-[15px] items-center">
          <Arrow className="rotate-90" />
        </div>
      </div>
      <StatusBar />
      <Taskbar />
    </div>
  );
}
